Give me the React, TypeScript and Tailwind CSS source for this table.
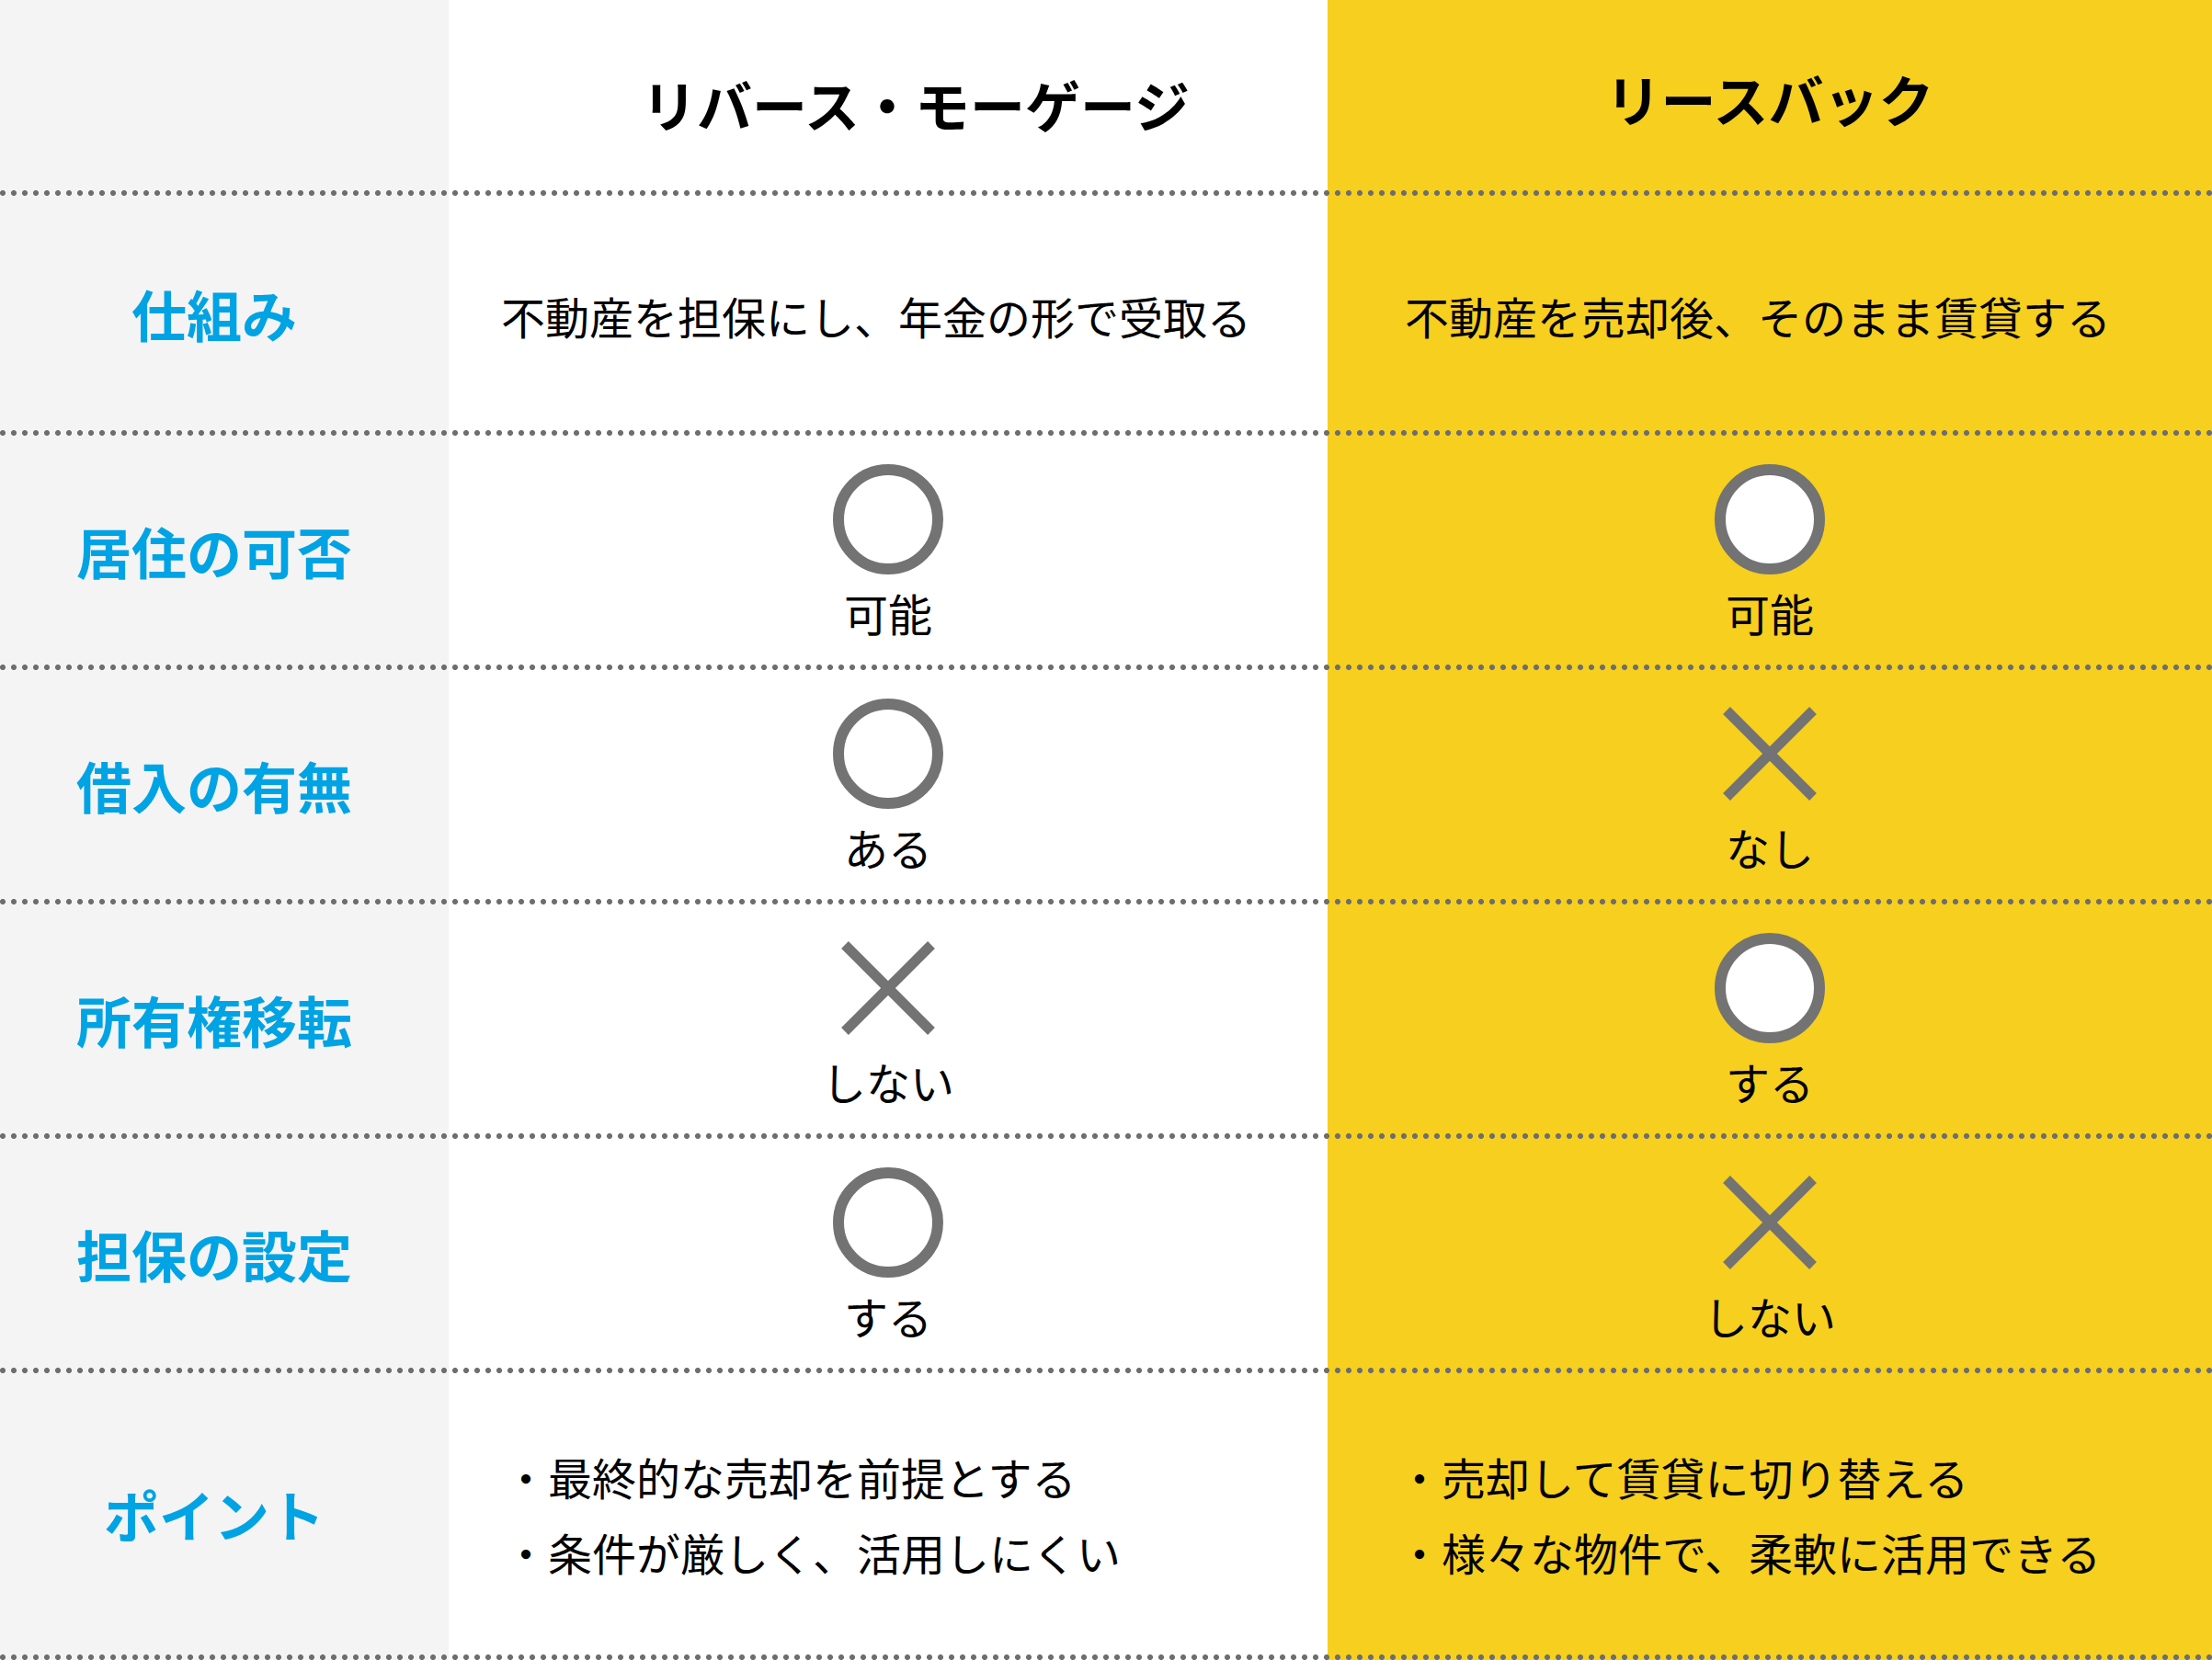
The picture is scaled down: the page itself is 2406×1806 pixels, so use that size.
import { ReactNode } from "react";

type Mark = "o" | "x";

const font = { fontFamily: '"Noto Sans CJK JP", "Noto Sans", sans-serif' };

function Dots() {
  // dotted separator drawn over the three column colours
  return (
    <div className="h-[6px] w-full bg-[radial-gradient(circle,#6e6e6e_2.7px,transparent_3.3px),linear-gradient(to_right,#f4f4f4_488px,#ffffff_488px,#ffffff_1444px,#f6cf1f_1444px)] bg-[length:12px_6px,100%_100%] bg-[position:-3px_0,0_0]" />
  );
}

function Symbol({ mark, yellow }: { mark: Mark; yellow: boolean }) {
  if (mark === "o") {
    return (
      <div
        className={`h-[120px] w-[120px] rounded-full border-[12px] border-[#737373] ${
          yellow ? "bg-white" : "bg-transparent"
        }`}
      />
    );
  }
  return (
    <svg width="120" height="120" viewBox="0 0 120 120">
      <line x1="13" y1="13" x2="107" y2="107" stroke="#737373" strokeWidth="11" />
      <line x1="107" y1="13" x2="13" y2="107" stroke="#737373" strokeWidth="11" />
    </svg>
  );
}

function Row({ label, h, mid, right }: { label: string; h: string; mid: ReactNode; right: ReactNode }) {
  return (
    <div className={`grid grid-cols-[488px_956px_962px] ${h}`}>
      <div className="flex items-center justify-center bg-[#f4f4f4] pr-[22px]">
        <span className="text-[60px] font-bold leading-none text-[#00a3e3]">{label}</span>
      </div>
      <div className="flex items-center justify-center bg-white">{mid}</div>
      <div className="flex items-center justify-center bg-[#f6cf1f]">{right}</div>
    </div>
  );
}

function MarkCell({ mark, text, yellow = false }: { mark: Mark; text: string; yellow?: boolean }) {
  return (
    <div className="flex flex-col items-center gap-[10px] pt-[6px]">
      <Symbol mark={mark} yellow={yellow} />
      <span className="text-[48px] leading-[1.3] text-black">{text}</span>
    </div>
  );
}

function Bullets({ items }: { items: string[] }) {
  return (
    <ul className="flex flex-col gap-[26px] text-[48px] leading-[56px] text-black">
      {items.map((t) => (
        <li key={t}>・{t}</li>
      ))}
    </ul>
  );
}

export default function App() {
  return (
    <div className="flex w-[2406px] flex-col" style={font}>
      <div className="grid h-[207px] grid-cols-[488px_956px_962px]">
        <div className="bg-[#f4f4f4]" />
        <div className="flex items-center justify-center bg-white pl-[60px] pt-[18px]">
          <h2 className="text-[60px] font-bold text-black">リバース・モーゲージ</h2>
        </div>
        <div className="flex items-center justify-center bg-[#f6cf1f] pt-[6px]">
          <h2 className="text-[60px] font-bold text-black">リースバック</h2>
        </div>
      </div>
      <Dots />
      <Row
        label="仕組み"
        h="h-[255px]"
        mid={<p className="pr-[26px] pt-[4px] text-[48px] text-black">不動産を担保にし、年金の形で受取る</p>}
        right={<p className="pr-[26px] pt-[4px] text-[48px] text-black">不動産を売却後、そのまま賃貸する</p>}
      />
      <Dots />
      <Row label="居住の可否" h="h-[249px]" mid={<MarkCell mark="o" text="可能" />} right={<MarkCell mark="o" text="可能" yellow />} />
      <Dots />
      <Row label="借入の有無" h="h-[249px]" mid={<MarkCell mark="o" text="ある" />} right={<MarkCell mark="x" text="なし" yellow />} />
      <Dots />
      <Row label="所有権移転" h="h-[249px]" mid={<MarkCell mark="x" text="しない" />} right={<MarkCell mark="o" text="する" yellow />} />
      <Dots />
      <Row label="担保の設定" h="h-[249px]" mid={<MarkCell mark="o" text="する" />} right={<MarkCell mark="x" text="しない" yellow />} />
      <Dots />
      <div className="grid h-[306px] grid-cols-[488px_956px_962px]">
        <div className="flex items-center justify-center bg-[#f4f4f4] pr-[22px]">
          <span className="text-[60px] font-bold leading-none text-[#00a3e3]">ポイント</span>
        </div>
        <div className="flex items-center bg-white pl-[60px]">
          <Bullets items={["最終的な売却を前提とする", "条件が厳しく、活用しにくい"]} />
        </div>
        <div className="flex items-center bg-[#f6cf1f] pl-[76px]">
          <Bullets items={["売却して賃貸に切り替える", "様々な物件で、柔軟に活用できる"]} />
        </div>
      </div>
      <Dots />
    </div>
  );
}
